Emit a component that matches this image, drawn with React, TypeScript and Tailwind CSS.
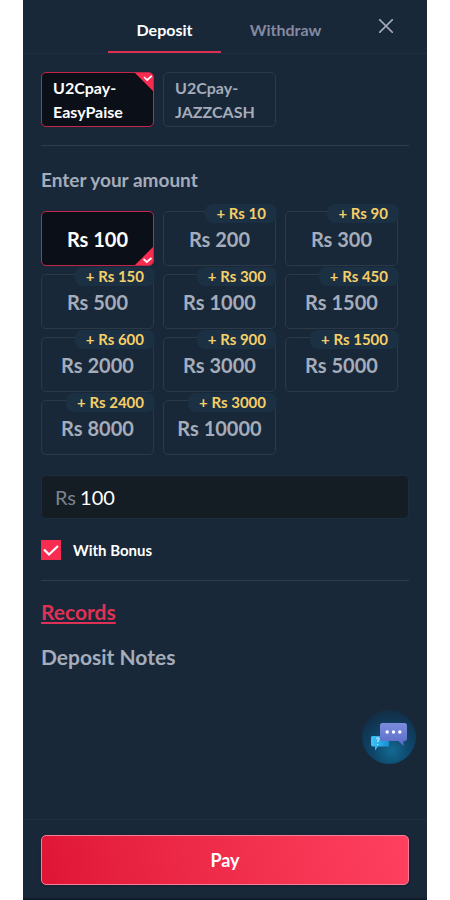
import { useState } from 'react';

const methods = ['U2Cpay-EasyPaise', 'U2Cpay-JAZZCASH'];

const amounts = [
  { value: 100, bonus: 0 },
  { value: 200, bonus: 10 },
  { value: 300, bonus: 90 },
  { value: 500, bonus: 150 },
  { value: 1000, bonus: 300 },
  { value: 1500, bonus: 450 },
  { value: 2000, bonus: 600 },
  { value: 3000, bonus: 900 },
  { value: 5000, bonus: 1500 },
  { value: 8000, bonus: 2400 },
  { value: 10000, bonus: 3000 },
];

const cardBase = 'relative h-[55px] rounded-[5px] border';
const cardOn = 'border-[#c4264a] bg-[#0b1018] text-white';
const cardOff = 'border-[#2c3947] text-[#a5acba]';

function CornerCheck({ position }: { position: 'top' | 'bottom' }) {
  return (
    <svg
      viewBox="0 0 18 18"
      className={`absolute right-0 size-[18px] ${position === 'top' ? 'top-0 rounded-tr-[4px]' : 'bottom-0 rounded-br-[4px]'}`}
      aria-hidden="true"
    >
      <path
        d={position === 'top' ? 'M0 0H18V18Z' : 'M18 0V18H0Z'}
        fill="#f72c50"
      />
      <path
        d={position === 'top' ? 'M9 4L12.2 7L16.8 2.8' : 'M8.5 12L11.8 15L16.5 11'}
        fill="none"
        stroke="#fff"
        strokeWidth="1.7"
      />
    </svg>
  );
}

function ChatIcon() {
  return (
    <svg viewBox="0 0 54 54" className="size-[54px]" aria-hidden="true">
      <defs>
        <radialGradient id="glow" cx="0.55" cy="0.75" r="0.7">
          <stop offset="0" stopColor="#136a92" />
          <stop offset="0.5" stopColor="#0e456a" />
          <stop offset="1" stopColor="#122f49" />
        </radialGradient>
        <linearGradient id="small" x1="0" y1="0" x2="1" y2="0">
          <stop offset="0" stopColor="#3fc5fb" />
          <stop offset="1" stopColor="#168ed0" />
        </linearGradient>
        <linearGradient id="big" x1="0" y1="0" x2="0" y2="1">
          <stop offset="0" stopColor="#7b8cdf" />
          <stop offset="1" stopColor="#596bc5" />
        </linearGradient>
      </defs>
      <circle cx="27" cy="27" r="27" fill="url(#glow)" />
      <path
        d="M10.500 26H27V36.500H16L13 40.500V36.500H11Q9 36.500 9 34.500V27.500Q9 26 10.500 26Z"
        fill="url(#small)"
      />
      <path
        d="M14.500 29.200Q15 27.500 16.500 28Q18 29.200 15.800 31V32.300M15.600 34V35.200"
        fill="none"
        stroke="#b8ecff"
        strokeWidth="1.200"
      />
      <path
        d="M20.500 13H42.500Q45 13 45 15.500V28.500Q45 31 42.500 31H41.500V36L36.500 31H20.500Q18 31 18 28.500V15.500Q18 13 20.500 13Z"
        fill="url(#big)"
      />
      <g fill="#fff">
        <circle cx="25.200" cy="22" r="1.700" />
        <circle cx="31.500" cy="22" r="1.700" />
        <circle cx="37.800" cy="22" r="1.700" />
      </g>
    </svg>
  );
}

export default function App() {
  const [tab, setTab] = useState('Deposit');
  const [method, setMethod] = useState(methods[0]);
  const [amount, setAmount] = useState('100');
  const [withBonus, setWithBonus] = useState(true);

  return (
    <div className="min-h-screen bg-white px-[23px] font-['Lato',sans-serif]">
      <div className="relative flex min-h-screen flex-col border-b-2 border-[#111d2a] bg-[#182838]">
        <header className="relative flex h-[54px] justify-center gap-2 border-b border-[#1e303f]">
          {['Deposit', 'Withdraw'].map((name) => (
            <button
              key={name}
              type="button"
              onClick={() => setTab(name)}
              className={`w-[113px] border-b-2 pt-2 text-base font-bold ${tab === name ? 'border-[#dd2f51] text-white' : 'border-transparent text-[#8589a1]'}`}
            >
              {name}
            </button>
          ))}
          <button
            type="button"
            aria-label="Close"
            className="absolute top-[15px] right-[30px] p-1"
          >
            <svg viewBox="0 0 14 14" className="size-[14px]" aria-hidden="true">
              <path
                d="M0.500 0.500L13.500 13.500M13.500 0.500L0.500 13.500"
                stroke="#a3a9b9"
                strokeWidth="1.600"
                strokeLinecap="round"
              />
            </svg>
          </button>
        </header>

        <main className="flex-1 px-[18px] pt-[18px]">
          <div className="grid grid-cols-3 gap-x-[9px] pr-[11px]">
            {methods.map((name) => (
              <button
                key={name}
                type="button"
                onClick={() => setMethod(name)}
                className={`${cardBase} px-[11px] text-left text-base leading-6 font-bold ${method === name ? cardOn : cardOff}`}
              >
                {name}
                {method === name && <CornerCheck position="top" />}
              </button>
            ))}
          </div>

          <hr className="mt-[18px] border-[#2c3f50]" />

          <h2 className="mt-5 text-[19px] leading-7 font-bold text-[#a5acba]">
            Enter your amount
          </h2>

          <div className="mt-[17px] grid grid-cols-3 gap-x-[9px] gap-y-2 pr-[11px]">
            {amounts.map(({ value, bonus }) => {
              const selected = amount === String(value);
              return (
                <button
                  key={value}
                  type="button"
                  onClick={() => setAmount(String(value))}
                  className={`${cardBase} text-xl font-bold ${selected ? cardOn : cardOff}`}
                >
                  Rs {value}
                  {bonus > 0 && (
                    <span className="absolute -top-2 -right-0.5 rounded-lg bg-[#1b3043] px-[11px] text-[15px] leading-[19px] text-[#f5cf67]">
                      + Rs {bonus}
                    </span>
                  )}
                  {selected && <CornerCheck position="bottom" />}
                </button>
              );
            })}
          </div>

          <label className="mt-5 flex h-11 items-center gap-1 rounded-[5px] border border-[#1c2e3c] bg-[#141c24] px-[13px] text-xl">
            <span className="text-[#7d838d]">Rs</span>
            <input
              type="text"
              inputMode="numeric"
              value={amount}
              onChange={(e) => setAmount(e.target.value)}
              className="min-w-0 flex-1 bg-transparent text-white outline-none"
            />
          </label>

          <label className="mt-[21px] flex w-fit items-center gap-3 text-[15px] leading-5 font-bold text-white">
            <span className="grid size-5 place-items-center">
              <input
                type="checkbox"
                checked={withBonus}
                onChange={(e) => setWithBonus(e.target.checked)}
                className="col-start-1 row-start-1 size-5 appearance-none border border-[#f72c50] checked:bg-[#f72c50]"
              />
              {withBonus && (
                <svg
                  viewBox="0 0 20 20"
                  className="pointer-events-none col-start-1 row-start-1 size-5"
                  aria-hidden="true"
                >
                  <path
                    d="M3 9.500L8 14.500L17 6"
                    fill="none"
                    stroke="#fff"
                    strokeWidth="2.200"
                  />
                </svg>
              )}
            </span>
            With Bonus
          </label>

          <hr className="mt-5 border-[#2c3f50]" />

          <a
            href="#records"
            className="mt-[17px] block w-fit text-[21px] leading-7 font-bold text-[#df3155] underline decoration-2 underline-offset-2"
          >
            Records
          </a>
          <h2 className="mt-[17px] text-[21px] leading-7 font-bold text-[#a5acba]">
            Deposit Notes
          </h2>
        </main>

        <button
          type="button"
          aria-label="Open chat"
          className="absolute right-[11px] bottom-[134px] rounded-full"
        >
          <ChatIcon />
        </button>

        <footer className="border-t border-[#1e303f] px-[18px] pt-[15px] pb-[13px]">
          <button
            type="button"
            className="h-[50px] w-full rounded-[5px] border border-[#f77c95] bg-linear-75 from-[#e01436] to-[#ff405f] text-lg font-bold text-white shadow"
          >
            Pay
          </button>
        </footer>
      </div>
    </div>
  );
}
